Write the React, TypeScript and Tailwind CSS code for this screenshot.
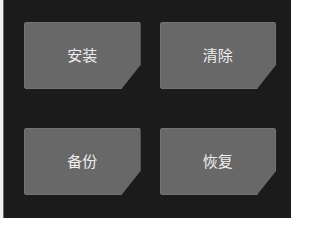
import React from 'react';

const actions = ['安装', '清除', '备份', '恢复'];

const ActionTile = ({ label }: { label: string }) => (
  <button
    className="h-[67px] w-full rounded-[2px] border border-[#727272] bg-[#686868] text-[15px] text-[#eeeeee] [clip-path:polygon(0_0,100%_0,100%_calc(100%-24px),calc(100%-19px)_100%,0_100%)]"
  >
    {label}
  </button>
);

export default function App() {
  return (
    <div className="flex h-[218px] w-[291px] bg-[#1b1b1b] font-['Noto_Sans_CJK_SC',sans-serif]">
      <div className="w-[3px] shrink-0 bg-[#f0f0f0]" />
      <div className="w-px shrink-0 bg-[#6a6a6a]" />
      <div className="grid flex-1 grid-cols-2 content-start gap-x-[19px] gap-y-[39px] pl-[20px] pr-[15px] pt-[22px]">
        {actions.map((a) => (
          <ActionTile key={a} label={a} />
        ))}
      </div>
    </div>
  );
}
